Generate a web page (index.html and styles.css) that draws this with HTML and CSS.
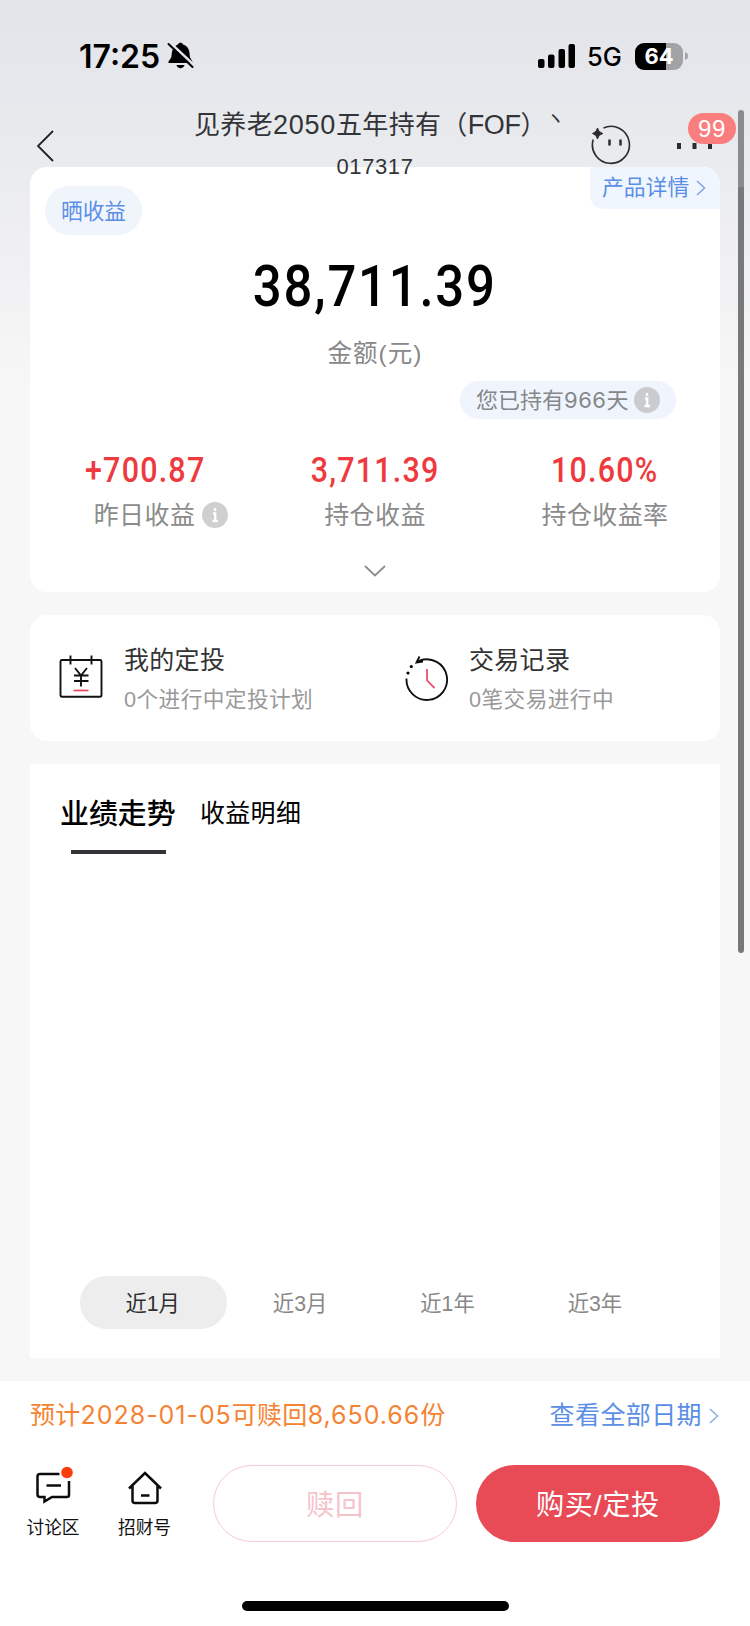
FILE: index.html
```html
<!DOCTYPE html>
<html lang="zh-CN">
<head>
<meta charset="utf-8">
<title>基金持仓</title>
<link rel="stylesheet" href="styles.css">
</head>
<body>
<div class="screen">
  <header class="top">
    <div class="status">
      <span class="clock">17:25</span>
      <svg class="bell" width="28" height="30" viewBox="0 0 28 30"><path d="M7 8C9 5 10 4.300 12 3.500C12.500 1.200 16.500 1.200 17 3.500C23 5.500 23.500 10 23.800 15C24 18 27 19.500 26.500 22H2.500C2 19.500 5 18.500 5.500 15C5.700 12 6 10 7 8Z"/><path d="M10.500 24H18.500C17.500 28.200 11.500 28.200 10.500 24Z"/><path d="M3.800 1.500L29 25" stroke="#e5e6eb" stroke-width="2.600"/><path d="M2.500 3L26.500 26" stroke="#000" stroke-width="2" stroke-linecap="round"/></svg>
      <svg class="signal" width="37" height="24" viewBox="0 0 37 24"><rect y="15" width="6.500" height="9" rx="2"/><rect x="10" y="10.500" width="6.500" height="13.500" rx="2"/><rect x="20.500" y="5" width="6.500" height="19" rx="2"/><rect x="30.500" width="6.500" height="24" rx="2"/></svg>
      <span class="net">5G</span>
      <span class="battery">64</span>
      <svg class="nub" width="4" height="8" viewBox="0 0 4 8"><path d="M0 0Q3 1 3 4T0 8Z" fill="#a2a3a7"/></svg>
    </div>
    <nav class="nav">
      <svg class="back" width="20" height="34" viewBox="0 0 20 34"><path d="M17 2L2 17L17 32" fill="none" stroke="#222" stroke-width="1.800"/></svg>
      <div class="heading">
        <div class="title">见养老<span class="yr">2050</span>五年持有（<span class="fof">FOF</span>）<span class="cut">丶</span></div>
        <div class="code">017317</div>
      </div>
      <svg class="face" width="42" height="42" viewBox="0 0 42 42"><path d="M13.500 3.900A18.500 18.500 0 1 1 3.200 15.500" fill="none" stroke="#2b2b2d" stroke-width="1.600"/><path d="M7.500 4Q8.200 8.300 12.800 9.500Q8.200 10.500 7.500 15Q6.700 10.500 2.500 9.500Q6.700 8.300 7.500 4Z" fill="#2b2b2d" stroke="#2b2b2d"/><path d="M19.500 15.500V21.500M30.500 15.500V21.500" stroke="#2b2b2d" stroke-width="2.500"/></svg>
      <div class="more">
        <svg width="36" height="6" viewBox="0 0 36 6"><path d="M0 0H4V6H0ZM15.500 0H19.500V6H15.500ZM31 0H35V6H31Z" fill="#2b2b2d"/></svg>
        <span class="badge">99</span>
      </div>
    </nav>
  </header>

  <main class="main">
    <section class="card summary">
      <div class="sumtop">
        <span class="share">晒收益</span>
        <span class="detail">产品详情<svg width="10" height="16" viewBox="0 0 10 16"><path d="M1 1L8.500 8L1 15" fill="none" stroke="#7ea5ea" stroke-width="1.500"/></svg></span>
      </div>
      <div class="amount"><span>38,711.39</span></div>
      <div class="amount-label">金额(元)</div>
      <div class="held"><span class="heldtxt">您已持有<span class="days">966</span>天</span><svg class="info" width="26" height="26" viewBox="0 0 26 26"><circle cx="13" cy="13" r="13" fill="#c9cbce"/><path d="M13 6V9M11 11.500H13.200V19M10.500 19H16" stroke="#fff" stroke-width="2.300" fill="none"/></svg></div>
      <div class="stats">
        <div class="stat s1"><b>+700.87</b><span>昨日收益<svg class="info" width="26" height="26" viewBox="0 0 26 26"><circle cx="13" cy="13" r="13" fill="#cfcfcf"/><path d="M13 6V9M11 11.500H13.200V19M10.500 19H16" stroke="#fff" stroke-width="2.300" fill="none"/></svg></span></div>
        <div class="stat"><b>3,711.39</b><span>持仓收益</span></div>
        <div class="stat"><b>10.60%</b><span>持仓收益率</span></div>
      </div>
      <svg class="expand" width="24" height="14" viewBox="0 0 24 14"><path d="M2 2L12 11.500L22 2" fill="none" stroke="#8c8c8c" stroke-width="1.800"/></svg>
    </section>

    <section class="card links">
      <div class="link">
        <svg width="44" height="46" viewBox="0 0 44 46"><g fill="none" stroke="#111" stroke-width="1.900"><path d="M1.500 6.500Q1.500 5 3 5H41Q42.500 5 42.500 6.500V40Q42.500 41.700 41 41.700H3Q1.500 41.700 1.500 40ZM11.500 .5V9.500M32.500 .5V9.500"/><path d="M16 13L22 20.500L28 13M22 20.500V31.500M15 20.500H29.500M15 26H29.500"/></g><path d="M14.500 35.500H29.500" stroke="#ef4256" stroke-width="1.700"/></svg>
        <div><h3>我的定投</h3><p>0个进行中定投计划</p></div>
      </div>
      <div class="link">
        <svg class="clockicon" width="44" height="46" viewBox="0 0 44 46"><g fill="none" stroke="#111" stroke-width="1.900"><path d="M14.500 .5L11.500 6.500L18 5.500M11.500 6.500L15 4.500A20.300 20.300 0 1 1 1.500 22.500"/></g><circle cx="6.300" cy="10.500" r="1.600"/><circle cx="3" cy="17" r="1.600"/><path d="M22 13V24.500L29.500 32" fill="none" stroke="#ee526e" stroke-width="1.800"/></svg>
        <div><h3>交易记录</h3><p>0笔交易进行中</p></div>
      </div>
    </section>

    <section class="trend">
      <div class="tabs"><span class="tab on">业绩走势</span><span class="tab">收益明细</span></div>
      <div class="periods"><span class="on">近1月</span><span>近3月</span><span>近1年</span><span>近3年</span></div>
    </section>
  </main>

  <footer class="bottom">
    <div class="notice"><span class="redeemable">预计<span class="num">2028-01-05</span>可赎回<span class="num">8,650.66</span>份</span><span class="dates">查看全部日期<svg width="10" height="16" viewBox="0 0 10 16"><path d="M1 1L8.500 8L1 15" fill="none" stroke="#8aaee9" stroke-width="1.500"/></svg></span></div>
    <div class="actions">
      <div class="act"><svg width="40" height="40" viewBox="0 0 40 40"><path d="M24.500 9H5Q2.500 9 2.500 11.500V29.500Q2.500 32 5 32H9.500V36.500L17 32H32Q34 32 34 30V16M11.500 20.500H26" fill="none" stroke="#0b0b0b" stroke-width="2.500"/><circle cx="32" cy="7.500" r="5.800" fill="#fb3c0b"/></svg><span>讨论区</span></div>
      <div class="act"><svg width="40" height="40" viewBox="0 0 40 40"><path d="M4 23.500L20 8L36 23.500M7.500 20.500V35.500Q7.500 38 10 38H30Q32.500 38 32.500 35.500V20.500M16 30.500H24.500" fill="none" stroke="#0b0b0b" stroke-width="2.500"/></svg><span>招财号</span></div>
      <div class="btn redeem">赎回</div>
      <div class="btn buy">购买/定投</div>
    </div>
    <div class="home"></div>
  </footer>
  <div class="scrollbar"></div>
</div>
</body>
</html>
```
FILE: styles.css
```css
* { box-sizing: border-box; }
body { margin: 0; font-family: "Liberation Sans", "Noto Sans CJK SC", sans-serif; }
svg { display: block; flex: none; }
h3, p { margin: 0; font-weight: 400; }
.screen { position: relative; width: 750px; height: 1626px; overflow: hidden; display: flex; flex-direction: column; background: linear-gradient(#e3e4e9 0, #e9eaee 140px, #f7f7f7 390px); white-space: nowrap; }
.top { height: 167px; flex: none; position: relative; z-index: 2; }
.status { height: 100px; padding: 12px 0 0 79px; display: flex; align-items: center; font-family: Inter, sans-serif; color: #000; }
.clock { width: 87px; font-size: 32px; font-weight: 600; letter-spacing: 0; line-height: 40px; margin-top: 1px; }
.bell { margin-left: 0; }
.signal { margin-left: 344px; }
.net { width: 60px; padding-left: 12px; font-size: 25.5px; font-weight: 500; letter-spacing: -.1px; line-height: 34px; margin-top: 2px; }
.battery { width: 48px; height: 27px; border-radius: 9px; background: linear-gradient(90deg, #000 65%, #a2a3a7 65%); color: #fff; font-size: 22px; font-weight: 700; line-height: 27px; text-align: center; }
.nub { margin-left: 2px; }
.nav { display: flex; height: 80px; }
.back { margin: 29px 0 0 36px; }
.heading { width: 376px; margin-left: 138px; color: #333438; }
.title { height: 40px; margin-top: 5px; font-size: 26px; letter-spacing: .35px; line-height: 40px; }
.yr { font-size: 27px; letter-spacing: .7px; }
.fof { font-size: 27px; letter-spacing: -.4px; }
.cut { display: inline-block; width: 12px; font-size: 22px; transform-origin: left center; transform: translate(0, -7px) scaleX(.8); }
.code { margin-top: 6px; margin-left: 5px; height: 32px; width: 352px; text-align: center; font-size: 22px; letter-spacing: .6px; line-height: 32px; }
.face { margin: 24px 0 0 20px; }
.more { position: relative; margin: 43px 0 0 45px; }
.badge { position: absolute; left: 11px; top: -30px; width: 48px; height: 31px; border-radius: 16px; background: #fa7e7e; color: #fff; font-size: 24px; line-height: 32px; text-align: center; letter-spacing: .6px; }
.main { padding: 0 30px; height: 1214px; flex: none; }
.card { background: #fff; border-radius: 17px; }
.summary { height: 425px; }
.sumtop { height: 68px; display: flex; justify-content: space-between; }
.share { margin: 19px 0 0 15px; width: 97px; height: 49px; border-radius: 25px; background: #f0f5fc; color: #5b8ee6; font-size: 21.7px; line-height: 51px; text-align: center; }
.detail { display: flex; align-items: center; width: 130px; height: 42px; padding-left: 12px; gap: 7px; background: #f0f6fd; border-radius: 0 17px 0 14px; color: #5b8ee6; font-size: 21.8px; line-height: 46px; }
.amount { height: 94px; display: flex; justify-content: center; align-items: center; padding-top: 10px; font-family: Roboto, sans-serif; font-weight: 500; font-size: 57.5px; line-height: 70px; color: #000; }
.amount span { transform: scaleX(.885); letter-spacing: 2px; }
.amount-label { height: 52px; text-align: center; font-size: 24.5px; letter-spacing: 1px; line-height: 49px; color: #888; }
.held { margin: 0 0 0 430px; width: 216px; height: 38px; border-radius: 19px; background: #f0f5fd; color: #858789; display: flex; align-items: center; padding-left: 16px; font-size: 22px; line-height: 38px; }
.heldtxt { width: 158px; }
.days { font-family: Inter, sans-serif; letter-spacing: .5px; }
.stats { display: grid; grid-template-columns: repeat(3, 230px); height: 137px; }
.stat { display: flex; flex-direction: column; align-items: center; padding-top: 32px; }
.stat b { font-family: Roboto, sans-serif; font-weight: 500; font-size: 35px; letter-spacing: 1.4px; line-height: 40px; color: #ee3a3e; transform: scaleX(.87); }
.stat span { display: flex; align-items: center; gap: 7px; margin-top: 5px; font-size: 25px; letter-spacing: .4px; line-height: 38px; color: #8b8b8b; }
.s1 span { padding-left: 32px; }
.expand { margin: 8px auto 0; }
.links { margin-top: 23px; height: 126px; display: flex; }
.link { width: 345px; display: flex; padding: 40px 0 0 29px; }
.link > div { margin-left: 20px; margin-top: -14px; }
.clockicon { margin: 1px 0 0 1px; }
.link h3 { font-size: 25px; letter-spacing: .3px; line-height: 38px; color: #333; }
.link p { font-size: 21.7px; letter-spacing: .4px; line-height: 41px; color: #999; }
.link:first-child > div { margin-left: 21px; }
.trend { margin-top: 23px; height: 594px; background: #fff; display: flex; flex-direction: column; justify-content: space-between; }
.tabs { display: flex; padding: 29px 0 0 30px; gap: 25px; color: #000; line-height: 42px; }
.tab { font-size: 25px; letter-spacing: .3px; margin-top: -1px; }
.tab.on { width: 115px; height: 61px; margin-top: 0; font-size: 28.9px; letter-spacing: 0; font-weight: 500; display: flex; flex-direction: column; }
.tab.on::after { content: ""; display: block; width: 95px; height: 4px; margin: 15px 0 0 11px; background: #343438; }
.periods { display: grid; grid-template-columns: repeat(4, 147.400px); grid-template-rows: 53px; height: 53px; margin: 0 0 29px 50px; font-size: 21.3px; line-height: 56px; color: #888; text-align: center; }
.periods span { padding-right: 2px; }
.periods .on { background: #ededee; border-radius: 27px; color: #303030; }
.bottom { height: 245px; flex: none; background: #fff; }
.notice { height: 84px; padding: 0 31px 0 30px; display: flex; justify-content: space-between; font-size: 25px; line-height: 69px; }
.redeemable { font-size: 25px; line-height: 69px; color: #f58331; letter-spacing: .3px; }
.num { font-family: Inter, sans-serif; font-size: 25px; letter-spacing: .95px; }
.dates { display: flex; height: 69px; align-items: center; gap: 7px; color: #5b8ee6; letter-spacing: .4px; }
.actions { display: flex; height: 77px; }
.act { width: 92px; display: flex; flex-direction: column; align-items: center; font-size: 17.700px; line-height: 28px; color: #111; }
.act svg { margin-left: 4px; }
.act span { margin-top: 9px; }
.act:first-child { margin-left: 7px; }
.act:nth-child(2) { width: 91px; }
.act:nth-child(2) svg { margin-left: 0; }
.btn { width: 244px; height: 77px; border-radius: 39px; font-size: 28.3px; line-height: 81px; text-align: center; letter-spacing: .6px; }
.redeem { margin-left: 23px; border: 1px solid #f7cbd1; color: #f5c3c9; line-height: 79px; }
.buy { margin-left: 19px; background: #e84a56; color: #fff; }
.home { width: 267px; height: 10px; margin: 59px 0 0 242px; border-radius: 5px; background: #000; }
.scrollbar { position: absolute; z-index: 3; left: 738px; top: 110px; width: 6px; height: 843px; border-radius: 3px; background: linear-gradient(#8a8b8e 77px, #77787a 77px); }
```
